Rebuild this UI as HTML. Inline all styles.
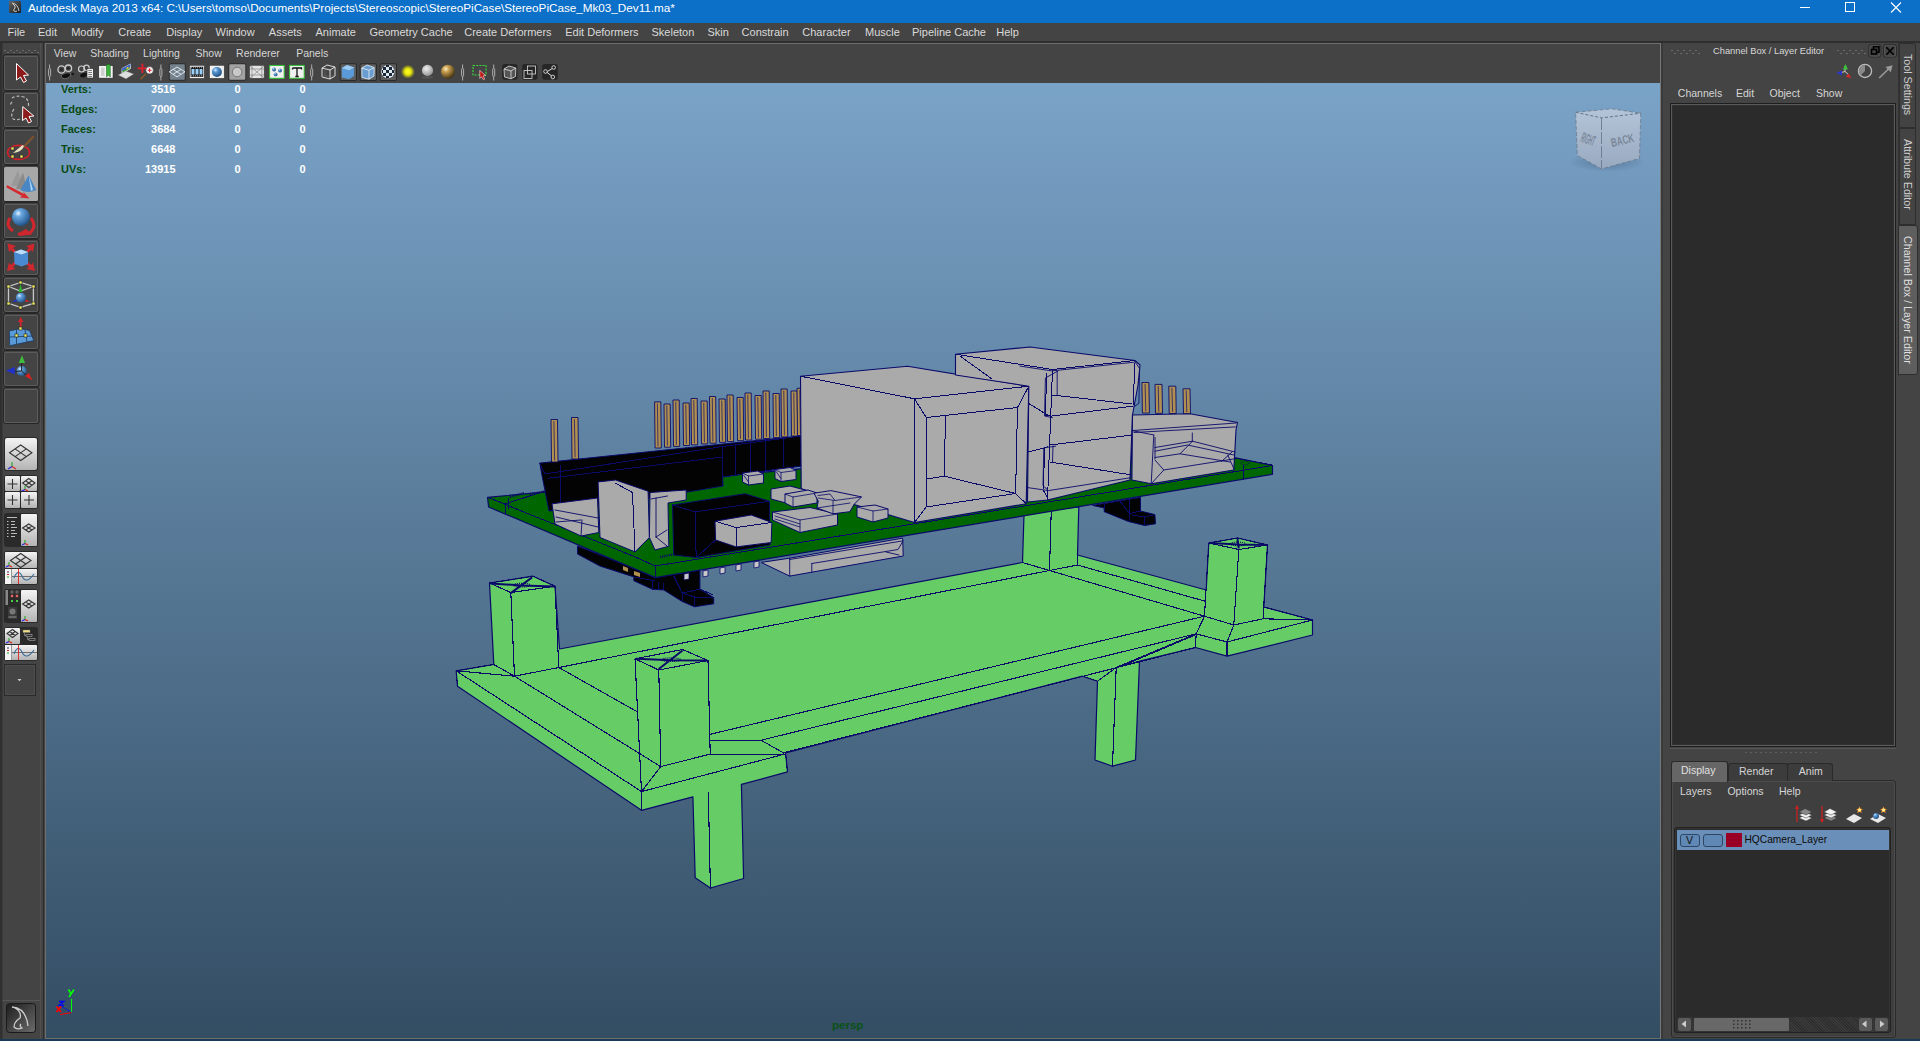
<!DOCTYPE html>
<html><head><meta charset="utf-8">
<style>
*{box-sizing:border-box;margin:0;padding:0}
html,body{width:1920px;height:1041px;overflow:hidden;background:#444444;font-family:"Liberation Sans",sans-serif;position:relative}
.a{position:absolute}
.t{position:absolute;white-space:pre;line-height:1;color:#d8d8d8}
#title{left:0;top:0;width:1920px;height:23px;background:#0c6fc8}
.mb .t{font-size:11px;top:27px;color:#dadada}
.pm .t{font-size:10.5px;top:48px;color:#d6d6d6}
.st .t{font-size:11px;font-weight:bold}.st .g{color:#0a4a12}.st .w{color:#fff}
.rm .t{font-size:10.5px;top:88px;color:#d6d6d6}.lt .t{font-size:10.5px;color:#d6d6d6}.vt{font-size:10.7px;color:#cfcfcf;transform-origin:0 0;transform:rotate(90deg) translateY(-10.5px);}
.tb{position:absolute;width:31px;height:33px;border:1px solid #2c2c2c;border-radius:3px;background:#464646;box-shadow:inset 0 0 0 1px #5a5a5a}
</style></head><body>
<!-- title bar -->
<div id="title">
  <div class="a" style="left:9px;top:1px;width:12px;height:12px;background:linear-gradient(135deg,#666,#1a1a1a);border-radius:1px"></div><svg class="a" style="left:9px;top:1px" width="12" height="12"><path d="M3 2Q9 3 10 10M4 3Q7 5 6 7Q4 9 5 10Q7 11 8 10" fill="none" stroke="#ddd" stroke-width="0.9"/></svg>
  <div class="t" style="left:28px;top:2px;font-size:11.7px;color:#fff">Autodesk Maya 2013 x64: C:\Users\tomso\Documents\Projects\Stereoscopic\StereoPiCase\StereoPiCase_Mk03_Dev11.ma*</div>
  <div class="a" style="left:1800px;top:7px;width:10px;height:1px;background:#fff"></div>
  <div class="a" style="left:1845px;top:2px;width:10px;height:10px;border:1px solid #fff"></div>
  <svg class="a" style="left:1890px;top:2px" width="12" height="11"><path d="M1 0.5L11 10.5M11 0.5L1 10.5" stroke="#fff" stroke-width="1.1"/></svg>
</div>
<!-- menu bar -->
<div id="menubar" class="a" style="left:0;top:23px;width:1920px;height:18px;background:#444">
</div>
<div class="mb"><div class="t" style="left:7.5px">File</div><div class="t" style="left:38.0px">Edit</div><div class="t" style="left:71.2px">Modify</div><div class="t" style="left:118.2px">Create</div><div class="t" style="left:166.2px">Display</div><div class="t" style="left:215.5px">Window</div><div class="t" style="left:268.8px">Assets</div><div class="t" style="left:315.5px">Animate</div><div class="t" style="left:369.5px">Geometry Cache</div><div class="t" style="left:464.2px">Create Deformers</div><div class="t" style="left:565.2px">Edit Deformers</div><div class="t" style="left:651.5px">Skeleton</div><div class="t" style="left:707.5px">Skin</div><div class="t" style="left:741.6px">Constrain</div><div class="t" style="left:802.3px">Character</div><div class="t" style="left:865.0px">Muscle</div><div class="t" style="left:912.0px">Pipeline Cache</div><div class="t" style="left:996.2px">Help</div></div>
<div class="a" style="left:0;top:41px;width:1920px;height:2px;background:#2e2e2e"></div>

<!-- left toolbox -->
<svg class="a" style="left:0;top:43px" width="44" height="996" viewBox="0 43 44 996">
<defs>
<radialGradient id="gsph" cx="0.35" cy="0.3" r="0.75"><stop offset="0" stop-color="#e8f4ff"/><stop offset="0.25" stop-color="#6aa8e0"/><stop offset="1" stop-color="#1d4f86"/></radialGradient>
<linearGradient id="glay" x1="0" y1="0" x2="0" y2="1"><stop offset="0" stop-color="#f4f4f4"/><stop offset="1" stop-color="#b4b4b4"/></linearGradient>
</defs>
<rect x="0" y="43" width="44" height="996" fill="#444"/>
<rect x="0" y="43" width="2.5" height="996" fill="#303030"/>
<rect x="40" y="43" width="1" height="996" fill="#505050"/>
<rect x="43" y="43" width="2" height="996" fill="#2c2c2c"/>
<!-- grip -->
<g fill="#6a6a6a">
<path d="M4 50h2v1h-2zM10 50h2v1h-2zM16 50h2v1h-2zM22 50h2v1h-2zM28 50h2v1h-2zM34 50h2v1h-2zM7 52h2v1h-2zM13 52h2v1h-2zM19 52h2v1h-2zM25 52h2v1h-2zM31 52h2v1h-2zM37 52h2v1h-2z"/>
</g>
<!-- tool buttons -->
<g fill="#444" stroke="#262626" stroke-width="1">
<rect x="3.5" y="54.5" width="35.5" height="36" rx="2"/>
<rect x="3.5" y="91.5" width="35.5" height="36" rx="2"/>
<rect x="3.5" y="128.5" width="35.5" height="36" rx="2"/>
<rect x="3.5" y="165.5" width="35.5" height="36" rx="2"/>
<rect x="3.5" y="202.5" width="35.5" height="36" rx="2"/>
<rect x="3.5" y="239.5" width="35.5" height="36" rx="2"/>
<rect x="3.5" y="276.5" width="35.5" height="36" rx="2"/>
<rect x="3.5" y="313.5" width="35.5" height="36" rx="2"/>
<rect x="3.5" y="350.5" width="35.5" height="36" rx="2"/>
<rect x="3.5" y="387.5" width="35.5" height="36" rx="2"/>
</g>
<g fill="none" stroke="#5c5c5c" stroke-width="1">
<rect x="4.5" y="56.5" width="33" height="33" rx="1.5"/>
<rect x="4.5" y="93.5" width="33" height="33" rx="1.5"/>
<rect x="4.5" y="130.5" width="33" height="33" rx="1.5"/>
<rect x="4.5" y="204.5" width="33" height="33" rx="1.5"/>
<rect x="4.5" y="241.5" width="33" height="33" rx="1.5"/>
<rect x="4.5" y="278.5" width="33" height="33" rx="1.5"/>
<rect x="4.5" y="315.5" width="33" height="33" rx="1.5"/>
<rect x="4.5" y="352.5" width="33" height="33" rx="1.5"/>
<rect x="4.5" y="389.5" width="33" height="33" rx="1.5"/>
</g>
<rect x="4" y="167" width="34" height="34" rx="1.5" fill="#a8a8a8"/>
<!-- 1 select arrow -->
<path d="M16.5 63.5L28.5 75L23.5 75.5L26.5 81L23.5 82.5L20.5 77L16.5 80Z" fill="#8e1b1b" stroke="#fff" stroke-width="1" stroke-linejoin="round"/>
<!-- 2 lasso -->
<path d="M12 98Q16 95 24 97Q29 99 28.5 107M12 102Q9 105 12 106M14 109Q11 113 12 118Q15 121 20 119" fill="none" stroke="#bbb" stroke-width="1.2" stroke-dasharray="3 2"/>
<path d="M22.8 106.6L33.8 116L29 116.5L31.5 121.5L28.5 123L26 118L22.5 120.5Z" fill="#8e1b1b" stroke="#fff" stroke-width="1" stroke-linejoin="round"/>
<!-- 3 paint -->
<ellipse cx="18.6" cy="152.4" rx="11" ry="7" fill="none" stroke="#d0202a" stroke-width="1.6"/>
<path d="M33 137L24 146.5" stroke="#7a5230" stroke-width="2.5" stroke-linecap="round"/>
<path d="M24 146Q22 152 13 153Q19 148 22.5 145Z" fill="#e8e0c0"/>
<g fill="#f4f060" stroke="#222" stroke-width="0.6"><rect x="11" y="147" width="3" height="3"/><rect x="11" y="155" width="3" height="3"/><rect x="20" y="155" width="3" height="3"/></g>
<!-- 4 move cones -->
<path d="M18 170L11 186L22 186Z" fill="#999"/><path d="M23 172.5L16 189L27 189Z" fill="#8a8a8a"/>
<path d="M28.7 175.3L20.3 190Q28 194 36.3 190Z" fill="#4a86c4"/><path d="M28.7 175.3L31 191L33 190Z" fill="#a8d6f8"/>
<path d="M7 185L24 194L23 191.5L29.5 198.5L19.5 197.5L22 196L6.5 187.5Z" fill="#d42a30"/>
<!-- 5 rotate -->
<path d="M10 218Q5 226 13 231M31 218Q37 226 31 232Q26 235 18 234" fill="none" stroke="#d0262e" stroke-width="3"/>
<path d="M17 234L26 229L32 235Z" fill="#d0262e"/>
<circle cx="20.9" cy="216.9" r="9" fill="url(#gsph)"/>
<!-- 6 scale -->
<g fill="#d0262e"><path d="M7.5 243.5L16 246L13 248L17 252L15 254L11 250L9 252Z"/><path d="M34.5 243.5L26 246L29 248L25 252L27 254L31 250L33 252Z"/><path d="M7 271L9 262.5L11 265L15 261L17 263L13 267L15.5 269Z"/><path d="M35 271L33 262.5L31 265L27 261L25 263L29 267L26.5 269Z"/></g>
<path d="M14 252L21 249.5L28 252L28 264L21.5 266.5L14.5 264Z" fill="#4a8ad0"/><path d="M14 252L21 249.5L28 252L21.5 254.5Z" fill="#bcdcf8"/>
<!-- 7 manip -->
<path d="M20.5 282.5L8.5 286.5L8.5 303.4L20.5 307.4L33.4 303.4L33.4 286.5Z M8.5 286.5L20.5 291 33.4 286.5" fill="none" stroke="#c8c8c8" stroke-width="1.3"/>
<circle cx="20.9" cy="297.7" r="5" fill="url(#gsph)"/>
<path d="M20.5 284L18.5 292L22.5 292Z" fill="#2db52d"/><path d="M12 302L16 299.5L17 301.5Z" fill="#2030e0"/><path d="M30 302L26 299.5L25 301.5Z" fill="#e02020"/>
<g fill="#f4f060" stroke="#222" stroke-width="0.6"><rect x="19" y="281" width="3" height="3"/><rect x="7" y="285" width="3" height="3"/><rect x="32" y="285" width="3" height="3"/><rect x="7" y="302" width="3" height="3"/><rect x="32" y="302" width="3" height="3"/><rect x="19" y="306" width="3" height="3"/></g>
<!-- 8 soft -->
<path d="M9.3 331L20.5 328.5L29.6 330.5L33.8 340.6L9.7 345.7Z" fill="#5b9ad8" stroke="#1c3a5c" stroke-width="0.8"/>
<path d="M9.5 337L33 336M16.5 330L16.5 344M25 330L27 342" stroke="#1c3a5c" stroke-width="0.8"/>
<path d="M20.7 317L18 322L19.8 322L19.8 327L21.6 327L21.6 322L23.4 322Z" fill="#d0262e"/>
<g fill="#f4f060" stroke="#222" stroke-width="0.6"><rect x="19" y="327" width="3" height="3"/><rect x="15" y="334" width="3" height="3"/><rect x="24" y="334" width="3" height="3"/></g>
<!-- 9 axis -->
<circle cx="21.6" cy="371" r="5" fill="url(#gsph)"/>
<path d="M21.6 371V362M21.6 371L14.5 371.5M21.6 371L27 376" stroke="#222" stroke-width="1"/>
<path d="M22 355.2L18.8 363L25 363Z" fill="#3cbf3c"/><path d="M5.9 370.5L14.8 367L14.8 374.5Z" fill="#2030c8"/><path d="M32.5 380.5L25 376L29 373Z" fill="#d82020"/>
<!-- layout buttons -->
<g fill="#2a2a2a"><rect x="4" y="437" width="34" height="34" rx="3"/><rect x="4" y="475" width="34" height="34" rx="3"/><rect x="4" y="513" width="34" height="34" rx="3"/><rect x="4" y="551" width="34" height="34" rx="3"/><rect x="4" y="589" width="34" height="34" rx="3"/><rect x="4" y="627" width="34" height="34" rx="3"/></g>
<g fill="url(#glay)">
<rect x="5" y="438" width="32" height="32" rx="2"/>
<rect x="5" y="476" width="15" height="15" rx="1"/><rect x="21" y="476" width="16" height="15" rx="1"/><rect x="5" y="492" width="15" height="16" rx="1"/><rect x="21" y="492" width="16" height="16" rx="1"/>
<rect x="21" y="514" width="16" height="32" rx="1"/>
<rect x="5" y="552" width="32" height="16" rx="1"/><rect x="5" y="569" width="32" height="15" rx="1"/>
<rect x="21" y="590" width="16" height="32" rx="1"/>
<rect x="5" y="628" width="15" height="16" rx="1"/><rect x="5" y="645" width="32" height="15" rx="1"/>
</g>
<rect x="5" y="569" width="6" height="15" fill="#f4f4f4"/><rect x="5" y="645" width="6" height="15" fill="#f4f4f4"/>
<rect x="11" y="569" width="1" height="15" fill="#999"/><rect x="11" y="645" width="1" height="15" fill="#999"/>
<path d="M12 576.5H37M12 652.5H37" stroke="#555" stroke-width="0.8"/>
<g fill="none" stroke="#333" stroke-width="1.1">
<path d="M20.7 445L31.9 452.7L20.7 460.5L9.5 452.7Z M15.1 448.9L26.3 456.6M26.3 448.9L15.1 456.6"/>
<path d="M12.5 479V489M7.5 484H17.5M12.5 495V505M7.5 500H17.5M29 495V505M24 500H34"/>
<path d="M28.8 478.5L35 483L28.8 487.5L22.6 483Z M25.7 480.7L31.9 485.3M31.9 480.7L25.7 485.3"/>
<path d="M28.8 524L35 528L28.8 532L22.6 528Z M25.7 526L31.9 530M31.9 526L25.7 530"/>
<path d="M20.7 553.5L31 560.5L20.7 567.5L10.4 560.5Z M15.5 557L25.9 564M25.9 557L15.5 564"/>
<path d="M28.8 600L35 604L28.8 608L22.6 604Z M25.7 602L31.9 606M31.9 602L25.7 606"/>
<path d="M12.5 629.5L18 633.5L12.5 637.5L7 633.5Z M9.7 631.5L15.2 635.5M15.2 631.5L9.7 635.5"/>
</g>
<path d="M14 578Q18 568 22 576Q26 585 34 574" fill="none" stroke="#3c6c98" stroke-width="1.1"/><path d="M18.5 569V584" stroke="#e02020" stroke-width="0.9"/>
<path d="M14 654Q18 644 22 652Q26 661 34 650" fill="none" stroke="#3c6c98" stroke-width="1.1"/><path d="M18.5 645V660" stroke="#e02020" stroke-width="0.9"/>
<g stroke-width="1"><path d="M7 572H9" stroke="#336"/><path d="M7 574.5H9" stroke="#d22"/><path d="M7 577H9" stroke="#2a2"/><path d="M7 648H9" stroke="#336"/><path d="M7 650.5H9" stroke="#d22"/><path d="M7 653H9" stroke="#2a2"/></g>
<g stroke="#ccc" stroke-width="0.9"><path d="M7 517.5H17M7 521.5H8.5M11 521.5H15M7 524.5H8.5M11 524.5H15M7 527.5H8.5M11 527.5H17M7 530.5H8.5M11 530.5H15M7 533.5H8.5M11 533.5H17M7 536.5H8.5M11 536.5H15"/></g>
<rect x="5.5" y="590" width="2.5" height="15" fill="#888"/>
<g fill="none" stroke="#888" stroke-width="0.7"><rect x="11" y="591" width="2" height="2"/><rect x="16" y="591" width="2" height="2"/></g>
<g fill="#e88" stroke="#c44" stroke-width="0.5"><rect x="11" y="595" width="2" height="2"/><rect x="16" y="595" width="2" height="2"/></g>
<g fill="#4c4"><rect x="11" y="600" width="2" height="2"/><rect x="16" y="600" width="2" height="2"/></g>
<rect x="8" y="607" width="9" height="12" fill="#3a3a3a"/><circle cx="12.5" cy="611.5" r="3" fill="#777"/><path d="M8.5 617H16.5" stroke="#aaa" stroke-width="0.8"/>
<rect x="23" y="630" width="7" height="2.5" fill="#eedd88" stroke="#776" stroke-width="0.4"/><g fill="none" stroke="#999" stroke-width="0.7"><rect x="26" y="634.5" width="6" height="2"/><rect x="29" y="638.5" width="6" height="2"/><path d="M24.5 632.5V635.5H26M27.5 636.5V639.5H29"/></g>
<g stroke-width="1.1"><path d="M12 466.5V462" stroke="#2a2"/><path d="M12 466.5L8 469" stroke="#22d"/><path d="M12 466.5L16 469" stroke="#d22"/>
<path d="M25 489.5V486" stroke="#2a2"/><path d="M25 489.5L22 491" stroke="#22d"/><path d="M25 489.5L28 491" stroke="#d22"/>
<path d="M25 543.5V540" stroke="#2a2"/><path d="M25 543.5L22 545" stroke="#22d"/><path d="M25 543.5L28 545" stroke="#d22"/>
<path d="M9 565.5V562" stroke="#2a2"/><path d="M9 565.5L6 567" stroke="#22d"/><path d="M9 565.5L12 567" stroke="#d22"/>
<path d="M25 619.5V616" stroke="#2a2"/><path d="M25 619.5L22 621" stroke="#22d"/><path d="M25 619.5L28 621" stroke="#d22"/>
<path d="M9 641.5V638" stroke="#2a2"/><path d="M9 641.5L6 643" stroke="#22d"/><path d="M9 641.5L12 643" stroke="#d22"/></g>
<rect x="4.5" y="664.5" width="31" height="31" fill="#444" stroke="#2a2a2a"/>
<rect x="5.5" y="665.5" width="29" height="29" fill="none" stroke="#4e4e4e"/>
<path d="M17.5 679h4l-2 2.2z" fill="#ccc"/>
<!-- inner frame -->
<rect x="2.5" y="1000" width="38" height="1" fill="#555"/>
<!-- maya logo -->
<rect x="6.5" y="1003.5" width="29" height="29" rx="3" fill="#2a2a2a" stroke="#1a1a1a"/>
<rect x="7" y="1004" width="28" height="28" rx="3" fill="url(#glogo)"/>
<defs><linearGradient id="glogo" x1="0" y1="0" x2="1" y2="1"><stop offset="0" stop-color="#1e1e1e"/><stop offset="1" stop-color="#6a6a6a"/></linearGradient></defs>
<path d="M12 1007Q26 1008 28 1026M15 1008Q22 1012 20 1018Q14 1022 14 1027Q17 1030 22 1028Q19 1026 21 1024" fill="none" stroke="#ccc" stroke-width="1.3"/>
</svg>


<!-- viewport panel -->
<div id="vpanel" class="a" style="left:45px;top:43px;width:1617px;height:996px;background:#444;border:1px solid #6e6e6e;border-right-color:#6e6e6e"></div>
<div class="pm"><div class="t" style="left:53.8px">View</div><div class="t" style="left:90.3px">Shading</div><div class="t" style="left:143.1px">Lighting</div><div class="t" style="left:195.5px">Show</div><div class="t" style="left:236.1px">Renderer</div><div class="t" style="left:296.2px">Panels</div></div>
<svg class="a" style="left:46px;top:60px" width="540" height="23" viewBox="46 60 540 23">
<defs>
<radialGradient id="gs2" cx="0.35" cy="0.3" r="0.75"><stop offset="0" stop-color="#d8ecff"/><stop offset="0.3" stop-color="#5a98d4"/><stop offset="1" stop-color="#1d4a7c"/></radialGradient>
<radialGradient id="gyel" cx="0.5" cy="0.5" r="0.5"><stop offset="0" stop-color="#ffff20"/><stop offset="0.45" stop-color="#e8e810"/><stop offset="1" stop-color="#e0e000" stop-opacity="0"/></radialGradient>
<radialGradient id="ggray" cx="0.4" cy="0.35" r="0.7"><stop offset="0" stop-color="#f0f0f0"/><stop offset="1" stop-color="#909090"/></radialGradient>
<radialGradient id="ggold" cx="0.35" cy="0.3" r="0.75"><stop offset="0" stop-color="#fff0c0"/><stop offset="0.3" stop-color="#c8a050"/><stop offset="1" stop-color="#3c2c10"/></radialGradient>
</defs>
<g fill="none" stroke="#bbb" stroke-width="0.9">
<path d="M49.6 64.5V68.5M49.6 76.5V80.5M160.9 64.5V68.5M160.9 76.5V80.5M311.7 64.5V68.5M311.7 76.5V80.5M462.6 64.5V68.5M462.6 76.5V80.5M493.7 64.5V68.5M493.7 76.5V80.5"/>
<rect x="48.6" y="68.5" width="2" height="8" rx="1"/><rect x="159.9" y="68.5" width="2" height="8" rx="1"/><rect x="310.7" y="68.5" width="2" height="8" rx="1"/><rect x="461.6" y="68.5" width="2" height="8" rx="1"/><rect x="492.7" y="68.5" width="2" height="8" rx="1"/>
</g>
<!-- cam1 -->
<g fill="none" stroke="#ccc" stroke-width="1.3"><circle cx="61.5" cy="69.5" r="3.6"/><circle cx="68.4" cy="68.2" r="3.2"/></g>
<g fill="#222"><circle cx="61.5" cy="69.5" r="1.3"/><circle cx="68.4" cy="68.2" r="1.2"/></g>
<path d="M61 76Q64 72 70 73Q72 76 67 78.5Q62 79.5 61 76Z" fill="#111" stroke="#999" stroke-width="0.6"/>
<path d="M70.5 74L73.5 72.5L74 75.5Z" fill="#111"/>
<!-- cam2 -->
<g fill="none" stroke="#ccc" stroke-width="1.2"><circle cx="81.5" cy="69" r="3"/><circle cx="86.5" cy="67.8" r="2.7"/></g>
<path d="M80 75Q83 72 87 73Q87 77 83 77.5Q80 77.5 80 75Z" fill="#111"/>
<rect x="87" y="68.5" width="6.3" height="9.5" fill="#f0f0f0" stroke="#222" stroke-width="0.6"/>
<path d="M88.3 70.5H92M88.3 72.5H92M88.3 74.5H92M88.3 76.5H92" stroke="#444" stroke-width="0.7"/>
<!-- book -->
<rect x="98.8" y="65.7" width="14.2" height="12.4" fill="#f2f2f2" stroke="#222" stroke-width="0.5"/>
<rect x="101" y="67.5" width="3.5" height="8.5" fill="#d0d0d0"/>
<path d="M106.5 64.5H110.3V77L108.4 75L106.5 77Z" fill="#3cb43c" stroke="#1a5a1a" stroke-width="0.5"/>
<!-- picture laptop -->
<path d="M117.8 75L126 79L134 74L126 71Z" fill="#e0e0e0" stroke="#555" stroke-width="0.5"/>
<path d="M122 73.5L130.5 68.5L130.5 64L122 68.5Z" fill="#48a040" stroke="#ddd" stroke-width="0.9"/>
<path d="M122 68.5L130.5 64V66.5L122 71Z" fill="#4060d0"/><circle cx="127.5" cy="68" r="1" fill="#e8d020"/>
<!-- move magnifier -->
<path d="M142.4 63.8V73M137.8 68.4H147" stroke="#e02030" stroke-width="1.6"/>
<path d="M142.4 63.5L141 65.5H143.8Z M142.4 73.3L141 71.3H143.8Z M137.5 68.4L139.5 67V69.8Z M147.3 68.4L145.3 67V69.8Z" fill="#e02030"/>
<circle cx="149.6" cy="70.3" r="3.8" fill="#f4f4f4" stroke="#333" stroke-width="0.6"/>
<path d="M149.6 68.3V72.3M147.6 70.3H151.6" stroke="#e02030" stroke-width="1.1"/>
<path d="M145.5 74.2L141 78.7" stroke="#8a5a2a" stroke-width="1.6" stroke-linecap="round"/>
<!-- selected wire grid -->
<rect x="168.8" y="63.3" width="17" height="17.5" rx="2" fill="#2c2c2c"/>
<rect x="169.8" y="64.3" width="15" height="15.5" rx="1" fill="#74828e"/>
<path d="M177 67L185 71.8L177 76.8L169.2 71.8Z M173.1 69.4L181 74.3M181 69.4L173.1 74.3" fill="none" stroke="#e8eef4" stroke-width="0.9"/>
<!-- film -->
<rect x="189.6" y="65.4" width="14.6" height="12.9" fill="#f0f0f0" stroke="#333" stroke-width="0.5"/>
<rect x="190.6" y="66.8" width="12.6" height="10" fill="#111"/>
<g fill="#9cd0f8"><rect x="191.5" y="69" width="3" height="5.5"/><rect x="195.5" y="69" width="3" height="5.5"/><rect x="199.5" y="69" width="3" height="5.5"/></g>
<g fill="#ddd"><rect x="191.2" y="67.3" width="0.9" height="0.9"/><rect x="193.2" y="67.3" width="0.9" height="0.9"/><rect x="195.2" y="67.3" width="0.9" height="0.9"/><rect x="197.2" y="67.3" width="0.9" height="0.9"/><rect x="199.2" y="67.3" width="0.9" height="0.9"/><rect x="201.2" y="67.3" width="0.9" height="0.9"/><rect x="191.2" y="75.3" width="0.9" height="0.9"/><rect x="193.2" y="75.3" width="0.9" height="0.9"/><rect x="195.2" y="75.3" width="0.9" height="0.9"/><rect x="197.2" y="75.3" width="0.9" height="0.9"/><rect x="199.2" y="75.3" width="0.9" height="0.9"/><rect x="201.2" y="75.3" width="0.9" height="0.9"/></g>
<!-- sphere -->
<rect x="209.6" y="65.4" width="14.6" height="12.9" fill="#f0f0f0" stroke="#333" stroke-width="0.5"/>
<circle cx="216.9" cy="72" r="5" fill="url(#gs2)"/>
<!-- selected circle -->
<rect x="228.3" y="63.3" width="18" height="17.5" rx="2" fill="#2c2c2c"/>
<rect x="229.3" y="64.3" width="16" height="15.5" rx="1" fill="#a2a2a2"/>
<circle cx="237.1" cy="72" r="4.8" fill="#c8c8c8" stroke="#666" stroke-width="0.8"/>
<!-- mesh -->
<rect x="249.6" y="65.4" width="14.6" height="12.9" fill="#e4e4e4" stroke="#333" stroke-width="0.5"/>
<path d="M250 66L264 78M264 66L250 78M252 66V78M261.8 66V78M250 69H264M250 75H264" stroke="#777" stroke-width="0.6"/>
<!-- dots -->
<rect x="269.6" y="65.4" width="14.6" height="12.9" fill="#f0f0f0" stroke="#2fc02f" stroke-width="1"/>
<g fill="url(#gs2)"><circle cx="274" cy="69.5" r="1.9"/><circle cx="280" cy="70.5" r="1.9"/><circle cx="275.6" cy="74.4" r="1.9"/></g>
<!-- T -->
<rect x="289.6" y="65.4" width="14.6" height="12.9" fill="#f0f0f0" stroke="#2fc02f" stroke-width="1"/>
<path d="M292.5 68H301.5V69.5M292.5 68V69.5M297 68V76.5M295.3 76.5H298.7" fill="none" stroke="#111" stroke-width="1.3"/>
<!-- wire cube -->
<path d="M322 68L327 65L335 67L335 76L330 79L322 77Z M322 68L330 70L335 67M330 70V79" fill="none" stroke="#eee" stroke-width="0.9"/>
<path d="M325 67L325 76L322 77M325 76L335 76" fill="none" stroke="#777" stroke-width="0.5"/>
<!-- selected blue cubes + checker -->
<g fill="#2a2a2a"><rect x="339.6" y="63.3" width="17.4" height="17.6" rx="2"/><rect x="359.6" y="63.3" width="17.4" height="17.6" rx="2"/><rect x="379.6" y="63.3" width="17.4" height="17.6" rx="2"/></g>
<g fill="#5c5c5c"><rect x="340.6" y="64.3" width="15.4" height="15.6" rx="1"/><rect x="360.6" y="64.3" width="15.4" height="15.6" rx="1"/><rect x="380.6" y="64.3" width="15.4" height="15.6" rx="1"/></g>
<path d="M341.8 68L347 65L354.2 67.5L354 76L349 79.2L342 77.5Z" fill="#5a9ad8"/>
<path d="M341.8 68L347 65L354.2 67.5L349 70.3Z" fill="#9ccaf0"/>
<path d="M361.8 68L367 65L374.2 67.5L374 76L369 79.2L362 77.5Z" fill="#6a9ed0" stroke="#e8f0f8" stroke-width="0.8"/>
<path d="M361.8 68L369 70.3L374.2 67.5M369 70.3V79" fill="none" stroke="#e8f0f8" stroke-width="0.8"/>
<circle cx="387.9" cy="71.7" r="6.6" fill="#e0e8f0"/>
<g fill="#1a2838"><path d="M383 67h3v3h-3zM389 67h3v3h-3zM386 70h3v3h-3zM392 70h2v3h-2zM383 73h3v3h-3zM389 73h3v3h-3zM386 76h3v2h-3zM382 70h1v3h-1zM386 65h3v2h-3z"/></g>
<!-- lights -->
<circle cx="407.9" cy="71.7" r="7" fill="url(#gyel)"/>
<ellipse cx="427.5" cy="77.3" rx="6" ry="1.3" fill="#555"/>
<circle cx="427.5" cy="70.4" r="5.6" fill="url(#ggray)"/>
<circle cx="447.9" cy="71.7" r="7" fill="url(#ggold)"/>
<!-- select box -->
<rect x="473" y="65.5" width="13" height="9.5" fill="none" stroke="#3ce03c" stroke-width="1.1" stroke-dasharray="2 1.2"/>
<path d="M479.7 70.3L485.5 75.5L483 76L484.8 79L483.3 79.8L481.5 76.8L479.8 78.5Z" fill="#c01818" stroke="#fff" stroke-width="0.5"/>
<!-- dark buttons -->
<g fill="#262626"><rect x="502.2" y="64" width="15.3" height="15.7" rx="2.5"/><rect x="522.2" y="64" width="15.3" height="15.7" rx="2.5"/><rect x="542.2" y="64" width="15.6" height="15.7" rx="2.5"/></g>
<path d="M504 69L509 66L515.8 68L515.5 76.5L511 78.8L504.5 77Z" fill="#555" stroke="#e0e0e0" stroke-width="0.8"/>
<path d="M504 69L511 71L515.8 68M511 71V78.6" fill="none" stroke="#e0e0e0" stroke-width="0.8"/>
<g fill="none" stroke="#ddd" stroke-width="0.8"><rect x="524" y="70.5" width="8" height="8"/><rect x="527.5" y="66" width="8" height="8"/></g>
<path d="M546.5 72L553 68M546.5 72L552.5 76.7" stroke="#ddd" stroke-width="1"/>
<g fill="#262626" stroke="#ddd" stroke-width="0.9"><circle cx="545.5" cy="71.5" r="1.8"/><circle cx="553.7" cy="67.5" r="1.8"/><circle cx="552.8" cy="77" r="1.8"/></g>
</svg>

<div id="viewport" class="a" style="left:46px;top:83px;width:1614px;height:955px;background:linear-gradient(#7aa3c8,#334d63)"></div>

<svg class="a" style="left:0;top:0" width="1920" height="1041" viewBox="0 0 1920 1041"><polygon points="456.2,670.8 493.8,664.5 489.5,583.0 533.0,576.2 555.0,586.2 559.5,649.0 1022.5,562.5 1024.0,514.0 1051.0,510.0 1078.8,507.0 1077.5,555.0 1206.2,590.0 1208.8,543.0 1237.5,538.0 1267.5,545.0 1263.8,607.0 1312.5,620.0 1312.5,635.0 1227.0,656.2 1195.5,647.5 1139.5,661.2 1135.5,760.0 1112.5,766.2 1095.0,760.0 1097.5,681.2 1082.5,676.2 785.6,753.0 787.5,771.9 741.4,784.4 743.6,878.5 710.4,888.0 695.2,877.8 692.9,796.8 641.5,810.3 457.5,686.2" fill="#66cc66" stroke="#0a0a6a" stroke-width="1.2" stroke-linejoin="round"/>
<path d="M489.5 583.0 L533.0 576.2 L555.0 586.2 L510.8 592.5 L489.5 583.0M510.8 592.5 L514.5 676.2M555.0 586.2 L558.8 667.5M456.2 670.8 L493.8 664.5M493.8 664.5 L514.5 676.2 L558.8 667.5M456.2 670.8 L514.5 676.2M456.2 670.8 L641.5 791.6M514.5 676.2 L660.7 766.6M558.8 667.5 L636.2 711.2M456.2 670.8 L457.5 686.2M641.5 791.6 L641.5 810.3M635.0 658.8 L682.5 649.5 L708.0 660.5 L658.8 670.0 L635.0 658.8M635.0 658.8 L641.5 791.6M658.8 670.0 L660.7 766.6M708.0 660.5 L710.2 754.1M660.7 766.6 L641.5 791.6M660.7 766.6 L710.2 754.1M709.7 740.2 L761.1 740.2 L783.7 753.1M710.2 754.1 L784.7 754.1M641.5 791.6 L784.7 754.1M785.6 754.1 L787.5 771.9M709.7 734.4 L1204.5 616.2M761.1 740.2 L1196.2 633.8M784.7 752.5 L1195.5 647.5M558.8 667.5 L1049.5 570.5M1022.5 562.5 L1049.5 570.5 L1077.5 565.0M1051.2 512.0 L1049.5 570.0M1077.5 553.0 L1077.5 565.0M1077.5 565.0 L1205.0 601.2M1049.5 570.5 L1204.5 616.2M1208.8 543.0 L1237.5 538.0 L1267.5 545.0 L1238.8 549.5 L1208.8 543.0M1238.8 549.5 L1233.8 625.0M1208.8 543.0 L1204.5 616.2M1204.5 616.2 L1233.8 625.0 L1263.0 618.8M1267.5 545.0 L1263.0 618.8M1263.8 607.0 L1312.5 620.0M1312.5 620.0 L1227.0 642.0M1227.0 642.0 L1227.0 656.2M1233.8 625.0 L1227.0 642.0M1204.5 616.2 L1196.2 633.8 L1195.5 647.5M1196.2 633.8 L1227.0 642.0M1263.0 618.8 L1312.5 620.0M1097.5 681.2 L1116.2 667.5 L1139.5 661.2M1116.2 667.5 L1112.5 766.2M1116.2 667.5 L1196.2 633.8M1122.0 666.0 L1196.2 634.5M1082.5 676.2 L1097.5 681.2M708.3 792.5 L710.4 888.0" fill="none" stroke="#0a0a6a" stroke-width="1.1" stroke-linejoin="round" stroke-linecap="round" shape-rendering="crispEdges"/>
<path d="M490.4 583.4L522.2 585.6L554 586.6M510.7 593.1L532.1 577.4" stroke="#0a0a6a" stroke-width="2" fill="none"/>
<ellipse cx="521.8" cy="585.1" rx="8.5" ry="1.8" fill="none" stroke="#0a0a6a" stroke-width="1.2" stroke-dasharray="1 1"/>
<path d="M636 658.75L671.5 660.225L707 660.5M658.75 669L682.5 650.5" stroke="#0a0a6a" stroke-width="2" fill="none"/>
<ellipse cx="671.1" cy="659.7" rx="9.5" ry="1.8" fill="none" stroke="#0a0a6a" stroke-width="1.2" stroke-dasharray="1 1"/>
<path d="M1209.75 543L1238.125 544.6L1266.5 545M1238.75 548.5L1237.5 539" stroke="#0a0a6a" stroke-width="2" fill="none"/>
<ellipse cx="1238.1" cy="543.9" rx="7.6" ry="1.8" fill="none" stroke="#0a0a6a" stroke-width="1.2" stroke-dasharray="1 1"/>
<polygon points="577.5,546.0 633.0,568.0 655.3,577.6 699.9,570.0 699.9,589.2 713.7,597.6 713.7,603.8 694.5,606.8 682.2,601.5 663.8,590.0 652.2,589.2 633.8,580.7 633.8,576.9 600.0,566.1 577.5,554.0" fill="#030303" stroke="#0a0a6a" stroke-width="1" stroke-linejoin="round"/>
<path d="M633.8 576.9 L655.0 581.0M652.2 580.0 L652.2 589.2M658.0 582.0 L658.0 590.0M663.8 583.0 L663.8 590.0M673.8 576.1 L682.2 593.0 L682.2 601.5M682.2 593.0 L699.9 589.2 L712.2 594.5M694.5 597.0 L694.5 606.8M682.2 593.0 L694.5 597.0 L713.7 597.6" fill="none" stroke="#0a0a6a" stroke-width="1" stroke-linejoin="round" stroke-linecap="round" shape-rendering="crispEdges"/>
<polygon points="684.0,574.0 689.0,573.0 689.0,579.0 684.0,580.0" fill="#c8c8c8" stroke="#0a0a6a" stroke-width="0.8" stroke-linejoin="round"/>
<polygon points="703.0,571.0 708.0,570.0 708.0,576.0 703.0,577.0" fill="#c8c8c8" stroke="#0a0a6a" stroke-width="0.8" stroke-linejoin="round"/>
<polygon points="720.0,568.0 725.0,567.0 725.0,573.0 720.0,574.0" fill="#c8c8c8" stroke="#0a0a6a" stroke-width="0.8" stroke-linejoin="round"/>
<polygon points="736.0,565.0 741.0,564.0 741.0,570.0 736.0,571.0" fill="#c8c8c8" stroke="#0a0a6a" stroke-width="0.8" stroke-linejoin="round"/>
<polygon points="754.0,562.0 759.0,561.0 759.0,567.0 754.0,568.0" fill="#c8c8c8" stroke="#0a0a6a" stroke-width="0.8" stroke-linejoin="round"/>
<polygon points="761.1,562.4 789.7,558.2 902.7,538.1 903.2,556.0 789.7,576.1" fill="#aaaaaa" stroke="#0a0a6a" stroke-width="1" stroke-linejoin="round"/>
<path d="M789.7 558.2 L789.7 576.1M811.8 563.5 L811.8 572.2M789.7 559.5 L902.0 541.0M811.8 563.5 L898.0 549.5 L903.0 541.0M886.0 552.0 L899.0 555.0" fill="none" stroke="#0a0a6a" stroke-width="0.9" stroke-linejoin="round" stroke-linecap="round" shape-rendering="crispEdges"/>
<polygon points="1092.7,505.4 1140.5,497.3 1140.5,511.1 1154.9,514.6 1155.5,523.8 1144.6,525.5 1128.4,521.5 1104.2,511.7 1104.2,508.0" fill="#030303" stroke="#0a0a6a" stroke-width="1" stroke-linejoin="round"/>
<path d="M1104.2 504.0 L1104.2 511.7M1120.0 501.0 L1129.5 513.5M1129.5 499.0 L1129.5 521.5M1129.5 513.5 L1140.5 511.1M1132.0 515.0 L1144.6 517.0 L1154.9 514.6M1144.6 517.0 L1144.6 525.5" fill="none" stroke="#0a0a6a" stroke-width="1" stroke-linejoin="round" stroke-linecap="round" shape-rendering="crispEdges"/>
<polygon points="623.0,566.0 628.0,568.0 628.0,572.0 623.0,570.0" fill="#b09050"/>
<polygon points="634.0,571.0 640.0,573.0 640.0,577.0 634.0,575.0" fill="#b09050"/>
<polygon points="487.5,497.3 1140.0,438.0 1272.5,465.5 1272.5,474.2 655.3,577.6 488.6,507.0" fill="#006600" stroke="#0a0a6a" stroke-width="1.2" stroke-linejoin="round"/>
<path d="M487.5 497.3 L633.0 556.0M633.0 556.0 L655.3 566.0M655.3 566.0 L1272.5 465.5M655.3 566.0 L655.3 577.6M1235.0 458.0 L1272.0 465.0M508.0 498.0 L508.0 509.0M600.0 538.0 L605.0 532.0 L640.0 535.0" fill="none" stroke="#0a0a6a" stroke-width="1" stroke-linejoin="round" stroke-linecap="round" shape-rendering="crispEdges"/>
<path d="M510 497L524 493M530 494L545 491.5M660 557L690 551" stroke="#0a0a6a" stroke-width="2.2" stroke-dasharray="1.2 1"/>
<path d="M487.5 497.3 L505.0 504.0 L506.0 514.0M505.0 504.0 L545.0 491.0" fill="none" stroke="#0a0a6a" stroke-width="1" stroke-linejoin="round" stroke-linecap="round" shape-rendering="crispEdges"/>
<polygon points="539.8,463.1 801.0,435.9 801.0,466.1 722.6,477.0 723.0,486.0 640.0,500.0 549.0,511.0 541.8,474.4" fill="#030303" stroke="#0a0a6a" stroke-width="1" stroke-linejoin="round"/>
<path d="M539.8 463.1 L545.0 474.0 L722.6 446.5 L801.0 436.0M548.9 478.2 L722.6 457.0M560.0 465.0 L560.0 511.0M722.6 446.5 L722.6 486.0M735.0 444.0 L735.0 475.0M750.0 442.0 L750.0 472.0M765.0 440.0 L765.0 470.0M783.0 437.0 L783.0 467.0M722.6 477.0 L801.0 466.0" fill="none" stroke="#0a0a6a" stroke-width="1" stroke-linejoin="round" stroke-linecap="round" shape-rendering="crispEdges"/>
<polygon points="551.0,419.5 557.5,419.5 558.0,462.0 551.5,462.0" fill="#b09050" stroke="#0a0a6a" stroke-width="0.9" stroke-linejoin="round"/>
<path d="M553.9 421.5 L554.6 460.0" fill="none" stroke="#0a0a6a" stroke-width="0.7" stroke-linejoin="round" stroke-linecap="round" shape-rendering="crispEdges"/>
<polygon points="571.5,417.5 578.0,417.5 578.5,459.0 572.0,459.0" fill="#b09050" stroke="#0a0a6a" stroke-width="0.9" stroke-linejoin="round"/>
<path d="M574.4 419.5 L575.1 457.0" fill="none" stroke="#0a0a6a" stroke-width="0.7" stroke-linejoin="round" stroke-linecap="round" shape-rendering="crispEdges"/>
<polygon points="654.6,401.9 660.8,401.9 661.3,448.0 655.1,448.0" fill="#b09050" stroke="#0a0a6a" stroke-width="0.9" stroke-linejoin="round"/>
<path d="M657.4 403.9 L658.0 446.0" fill="none" stroke="#0a0a6a" stroke-width="0.7" stroke-linejoin="round" stroke-linecap="round" shape-rendering="crispEdges"/>
<polygon points="664.0,404.0 670.2,404.0 670.7,447.2 664.5,447.2" fill="#b09050" stroke="#0a0a6a" stroke-width="0.9" stroke-linejoin="round"/>
<path d="M666.8 406.0 L667.4 445.2" fill="none" stroke="#0a0a6a" stroke-width="0.7" stroke-linejoin="round" stroke-linecap="round" shape-rendering="crispEdges"/>
<polygon points="673.0,400.0 679.2,400.0 679.7,446.4 673.5,446.4" fill="#b09050" stroke="#0a0a6a" stroke-width="0.9" stroke-linejoin="round"/>
<path d="M675.8 402.0 L676.4 444.4" fill="none" stroke="#0a0a6a" stroke-width="0.7" stroke-linejoin="round" stroke-linecap="round" shape-rendering="crispEdges"/>
<polygon points="683.0,403.0 689.2,403.0 689.7,445.5 683.5,445.5" fill="#b09050" stroke="#0a0a6a" stroke-width="0.9" stroke-linejoin="round"/>
<path d="M685.8 405.0 L686.4 443.5" fill="none" stroke="#0a0a6a" stroke-width="0.7" stroke-linejoin="round" stroke-linecap="round" shape-rendering="crispEdges"/>
<polygon points="691.0,398.5 697.2,398.5 697.7,444.8 691.5,444.8" fill="#b09050" stroke="#0a0a6a" stroke-width="0.9" stroke-linejoin="round"/>
<path d="M693.8 400.5 L694.4 442.8" fill="none" stroke="#0a0a6a" stroke-width="0.7" stroke-linejoin="round" stroke-linecap="round" shape-rendering="crispEdges"/>
<polygon points="701.0,401.0 707.2,401.0 707.7,443.9 701.5,443.9" fill="#b09050" stroke="#0a0a6a" stroke-width="0.9" stroke-linejoin="round"/>
<path d="M703.8 403.0 L704.4 441.9" fill="none" stroke="#0a0a6a" stroke-width="0.7" stroke-linejoin="round" stroke-linecap="round" shape-rendering="crispEdges"/>
<polygon points="709.5,396.5 715.7,396.5 716.2,443.2 710.0,443.2" fill="#b09050" stroke="#0a0a6a" stroke-width="0.9" stroke-linejoin="round"/>
<path d="M712.3 398.5 L712.9 441.2" fill="none" stroke="#0a0a6a" stroke-width="0.7" stroke-linejoin="round" stroke-linecap="round" shape-rendering="crispEdges"/>
<polygon points="719.0,399.0 725.2,399.0 725.7,442.3 719.5,442.3" fill="#b09050" stroke="#0a0a6a" stroke-width="0.9" stroke-linejoin="round"/>
<path d="M721.8 401.0 L722.4 440.3" fill="none" stroke="#0a0a6a" stroke-width="0.7" stroke-linejoin="round" stroke-linecap="round" shape-rendering="crispEdges"/>
<polygon points="727.0,395.0 733.2,395.0 733.7,441.6 727.5,441.6" fill="#b09050" stroke="#0a0a6a" stroke-width="0.9" stroke-linejoin="round"/>
<path d="M729.8 397.0 L730.4 439.6" fill="none" stroke="#0a0a6a" stroke-width="0.7" stroke-linejoin="round" stroke-linecap="round" shape-rendering="crispEdges"/>
<polygon points="737.0,397.5 743.2,397.5 743.7,440.7 737.5,440.7" fill="#b09050" stroke="#0a0a6a" stroke-width="0.9" stroke-linejoin="round"/>
<path d="M739.8 399.5 L740.4 438.7" fill="none" stroke="#0a0a6a" stroke-width="0.7" stroke-linejoin="round" stroke-linecap="round" shape-rendering="crispEdges"/>
<polygon points="745.0,393.0 751.2,393.0 751.7,440.0 745.5,440.0" fill="#b09050" stroke="#0a0a6a" stroke-width="0.9" stroke-linejoin="round"/>
<path d="M747.8 395.0 L748.4 438.0" fill="none" stroke="#0a0a6a" stroke-width="0.7" stroke-linejoin="round" stroke-linecap="round" shape-rendering="crispEdges"/>
<polygon points="755.0,395.5 761.2,395.5 761.7,439.2 755.5,439.2" fill="#b09050" stroke="#0a0a6a" stroke-width="0.9" stroke-linejoin="round"/>
<path d="M757.8 397.5 L758.4 437.2" fill="none" stroke="#0a0a6a" stroke-width="0.7" stroke-linejoin="round" stroke-linecap="round" shape-rendering="crispEdges"/>
<polygon points="763.0,391.0 769.2,391.0 769.7,438.5 763.5,438.5" fill="#b09050" stroke="#0a0a6a" stroke-width="0.9" stroke-linejoin="round"/>
<path d="M765.8 393.0 L766.4 436.5" fill="none" stroke="#0a0a6a" stroke-width="0.7" stroke-linejoin="round" stroke-linecap="round" shape-rendering="crispEdges"/>
<polygon points="773.0,393.5 779.2,393.5 779.7,437.6 773.5,437.6" fill="#b09050" stroke="#0a0a6a" stroke-width="0.9" stroke-linejoin="round"/>
<path d="M775.8 395.5 L776.4 435.6" fill="none" stroke="#0a0a6a" stroke-width="0.7" stroke-linejoin="round" stroke-linecap="round" shape-rendering="crispEdges"/>
<polygon points="781.0,389.0 787.2,389.0 787.7,436.9 781.5,436.9" fill="#b09050" stroke="#0a0a6a" stroke-width="0.9" stroke-linejoin="round"/>
<path d="M783.8 391.0 L784.4 434.9" fill="none" stroke="#0a0a6a" stroke-width="0.7" stroke-linejoin="round" stroke-linecap="round" shape-rendering="crispEdges"/>
<polygon points="791.0,391.0 797.2,391.0 797.7,436.0 791.5,436.0" fill="#b09050" stroke="#0a0a6a" stroke-width="0.9" stroke-linejoin="round"/>
<path d="M793.8 393.0 L794.4 434.0" fill="none" stroke="#0a0a6a" stroke-width="0.7" stroke-linejoin="round" stroke-linecap="round" shape-rendering="crispEdges"/>
<polygon points="797.0,388.3 803.2,388.3 803.7,435.5 797.5,435.5" fill="#b09050" stroke="#0a0a6a" stroke-width="0.9" stroke-linejoin="round"/>
<path d="M799.8 390.3 L800.4 433.5" fill="none" stroke="#0a0a6a" stroke-width="0.7" stroke-linejoin="round" stroke-linecap="round" shape-rendering="crispEdges"/>
<polygon points="1141.9,382.5 1148.9,382.5 1149.4,413.0 1142.4,413.0" fill="#b09050" stroke="#0a0a6a" stroke-width="0.9" stroke-linejoin="round"/>
<path d="M1145.1 384.5 L1145.8 411.0" fill="none" stroke="#0a0a6a" stroke-width="0.7" stroke-linejoin="round" stroke-linecap="round" shape-rendering="crispEdges"/>
<polygon points="1155.0,384.4 1162.0,384.4 1162.5,413.3 1155.5,413.3" fill="#b09050" stroke="#0a0a6a" stroke-width="0.9" stroke-linejoin="round"/>
<path d="M1158.2 386.4 L1158.8 411.3" fill="none" stroke="#0a0a6a" stroke-width="0.7" stroke-linejoin="round" stroke-linecap="round" shape-rendering="crispEdges"/>
<polygon points="1168.8,386.2 1175.8,386.2 1176.2,413.5 1169.2,413.5" fill="#b09050" stroke="#0a0a6a" stroke-width="0.9" stroke-linejoin="round"/>
<path d="M1171.9 388.2 L1172.6 411.5" fill="none" stroke="#0a0a6a" stroke-width="0.7" stroke-linejoin="round" stroke-linecap="round" shape-rendering="crispEdges"/>
<polygon points="1183.0,388.8 1190.0,388.8 1190.5,413.8 1183.5,413.8" fill="#b09050" stroke="#0a0a6a" stroke-width="0.9" stroke-linejoin="round"/>
<path d="M1186.2 390.8 L1186.8 411.8" fill="none" stroke="#0a0a6a" stroke-width="0.7" stroke-linejoin="round" stroke-linecap="round" shape-rendering="crispEdges"/>
<polygon points="800.5,376.2 907.5,366.2 1028.8,386.2 1026.2,503.8 914.5,522.5 801.2,488.8" fill="#aaaaaa" stroke="#0a0a6a" stroke-width="1.1" stroke-linejoin="round"/>
<path d="M800.5 376.2 L914.5 398.8 L1028.8 386.2M914.5 398.8 L914.5 522.5M914.5 398.8 L926.2 417.5 L1017.5 407.5 L1028.8 386.2M926.2 417.5 L926.2 507.0M1017.5 407.5 L1015.6 493.5M914.5 522.5 L926.2 507.0 L1015.6 493.5 L1026.2 503.8M945.4 416.5 L944.4 476.2M926.2 479.0 L944.4 476.2 L1015.6 493.5" fill="none" stroke="#0a0a6a" stroke-width="1" stroke-linejoin="round" stroke-linecap="round" shape-rendering="crispEdges"/>
<polygon points="955.5,354.2 1030.0,347.0 1135.0,360.5 1140.0,365.0 1138.0,385.0 1132.5,415.0 1130.0,480.0 1047.5,500.0 1027.5,502.0 1028.8,386.2 955.5,375.0" fill="#aaaaaa" stroke="#0a0a6a" stroke-width="1.1" stroke-linejoin="round"/>
<path d="M955.5 354.2 L1052.5 369.5 L1135.0 360.5M1052.5 369.5 L1047.5 500.0M955.5 354.2 L955.5 375.0M960.0 356.0 L992.0 379.0M1028.0 403.0 L1047.5 415.0M1028.0 452.0 L1047.5 447.0M1050.0 416.2 L1132.5 406.2M1050.0 445.0 L1132.5 435.0M1052.0 395.0 L1132.0 404.0M1050.0 462.0 L1132.0 475.0M1047.0 373.0 L1045.0 415.0 L1050.0 416.0M1045.0 447.0 L1043.0 490.0 L1048.0 498.0M1135.0 363.0 L1133.0 405.0M1133.0 435.0 L1130.0 477.0" fill="none" stroke="#0a0a6a" stroke-width="1" stroke-linejoin="round" stroke-linecap="round" shape-rendering="crispEdges"/>
<path d="M1020.0 366.1 L1051.7 370.9 L1134.1 362.2M1058.0 370.9 L1045.4 378.0 L1044.6 416.0 L1052.5 417.7M1057.2 371.0 L1057.2 394.7M1055.7 446.2 L1043.8 447.8 L1043.0 485.8 L1047.7 489.8M1053.0 446.0 L1052.5 462.0M1134.1 360.6 L1139.6 368.5 L1138.9 403.4 L1134.1 406.6M1130.9 435.1 L1137.3 435.9 L1136.5 471.5 L1129.4 477.9M1026.3 487.4 L1048.5 490.6 L1129.4 477.9" fill="none" stroke="#0a0a6a" stroke-width="0.9" stroke-linejoin="round" stroke-linecap="round" shape-rendering="crispEdges"/>
<polygon points="1132.5,415.0 1190.0,413.8 1237.5,422.5 1236.0,430.0 1233.8,470.0 1151.2,483.8 1131.9,480.0" fill="#aaaaaa" stroke="#0a0a6a" stroke-width="1.1" stroke-linejoin="round"/>
<path d="M1131.9 430.6 L1236.0 423.0M1134.0 432.5 L1235.4 426.9M1153.8 435.0 L1151.2 483.8M1131.9 430.6 L1153.8 435.0M1155.0 437.5 L1155.0 458.8M1192.3 433.0 L1192.3 441.5M1155.0 447.5 L1192.5 441.2 L1235.0 452.0M1155.0 451.2 L1187.5 445.0 L1234.0 455.0M1155.0 457.5 L1180.0 453.8 L1230.0 462.0M1180.0 453.8 L1192.5 441.2M1163.8 470.0 L1233.5 459.0M1155.0 460.0 L1163.8 470.0 L1151.2 483.8M1221.5 461.5 L1232.0 452.0M1227.7 455.0 L1234.0 469.0" fill="none" stroke="#0a0a6a" stroke-width="0.9" stroke-linejoin="round" stroke-linecap="round" shape-rendering="crispEdges"/>
<path d="M1243.0 465.0 L1243.0 480.0" fill="none" stroke="#0a0a6a" stroke-width="1" stroke-linejoin="round" stroke-linecap="round" shape-rendering="crispEdges"/>
<ellipse cx="1245" cy="463" rx="4" ry="2" fill="none" stroke="#0a0a6a" stroke-width="1" stroke-dasharray="1 1"/>
<polygon points="552.0,503.8 597.5,498.0 598.8,532.5 581.0,536.0 555.0,524.0" fill="#aaaaaa" stroke="#0a0a6a" stroke-width="1" stroke-linejoin="round"/>
<path d="M555.0 510.0 L598.0 518.0M556.0 517.0 L598.0 527.0M582.0 520.0 L581.0 536.0M556.0 522.0 L581.0 520.0" fill="none" stroke="#0a0a6a" stroke-width="0.9" stroke-linejoin="round" stroke-linecap="round" shape-rendering="crispEdges"/>
<polygon points="598.1,481.9 615.6,480.0 648.1,491.2 649.4,537.5 635.0,551.9 600.0,537.5" fill="#aaaaaa" stroke="#0a0a6a" stroke-width="1" stroke-linejoin="round"/>
<path d="M632.5 492.5 L635.0 551.9M649.0 538.0 L635.0 551.9M615.0 483.0 L632.5 492.5" fill="none" stroke="#0a0a6a" stroke-width="1" stroke-linejoin="round" stroke-linecap="round" shape-rendering="crispEdges"/>
<polygon points="650.0,492.5 686.2,490.0 686.2,500.0 668.0,503.0 668.8,546.2 655.0,550.0 649.4,537.5" fill="#aaaaaa" stroke="#0a0a6a" stroke-width="1" stroke-linejoin="round"/>
<path d="M651.0 499.0 L667.5 496.0M656.0 498.0 L656.0 537.0M656.0 537.0 L667.0 546.0M656.0 537.0 L667.0 530.0" fill="none" stroke="#0a0a6a" stroke-width="0.9" stroke-linejoin="round" stroke-linecap="round" shape-rendering="crispEdges"/>
<polygon points="672.5,505.0 745.0,493.8 769.4,501.2 770.0,545.0 696.2,557.5 673.8,555.0" fill="#030303" stroke="#0a0a6a" stroke-width="1" stroke-linejoin="round"/>
<path d="M672.5 505.0 L695.0 511.9 L769.4 501.2M695.0 511.9 L696.2 557.5M696.2 557.5 L720.0 536.0" fill="none" stroke="#0a0a6a" stroke-width="1" stroke-linejoin="round" stroke-linecap="round" shape-rendering="crispEdges"/>
<polygon points="715.0,521.2 751.2,515.0 771.9,522.5 771.2,542.5 736.2,546.9 715.6,540.0" fill="#aaaaaa" stroke="#0a0a6a" stroke-width="1" stroke-linejoin="round"/>
<path d="M715.0 521.2 L736.0 527.5 L771.9 522.5M736.0 527.5 L736.2 546.9" fill="none" stroke="#0a0a6a" stroke-width="1" stroke-linejoin="round" stroke-linecap="round" shape-rendering="crispEdges"/>
<polygon points="742.5,473.0 757.5,471.0 763.5,474.0 763.5,483.0 748.5,485.0 742.5,482.0" fill="#aaaaaa" stroke="#0a0a6a" stroke-width="1" stroke-linejoin="round"/>
<path d="M748.5 476.0 L748.5 485.0M742.5 473.0 L748.5 476.0 L763.5 474.0M743.5 475.0 L748.5 482.0" fill="none" stroke="#0a0a6a" stroke-width="0.8" stroke-linejoin="round" stroke-linecap="round" shape-rendering="crispEdges"/>
<polygon points="775.0,469.5 790.0,467.5 796.0,470.5 796.0,479.5 781.0,481.5 775.0,478.5" fill="#aaaaaa" stroke="#0a0a6a" stroke-width="1" stroke-linejoin="round"/>
<path d="M781.0 472.5 L781.0 481.5M775.0 469.5 L781.0 472.5 L796.0 470.5M776.0 471.5 L781.0 478.5" fill="none" stroke="#0a0a6a" stroke-width="0.8" stroke-linejoin="round" stroke-linecap="round" shape-rendering="crispEdges"/>
<polygon points="771.0,489.0 790.0,486.0 805.0,490.0 805.0,500.0 786.0,503.0 771.0,499.0" fill="#aaaaaa" stroke="#0a0a6a" stroke-width="1" stroke-linejoin="round"/>
<polygon points="785.0,494.0 808.0,490.0 817.0,493.0 817.0,503.0 793.0,507.0 785.0,503.0" fill="#aaaaaa" stroke="#0a0a6a" stroke-width="1" stroke-linejoin="round"/>
<path d="M785.0 494.0 L793.0 497.0 L817.0 493.0M793.0 497.0 L793.0 507.0" fill="none" stroke="#0a0a6a" stroke-width="0.8" stroke-linejoin="round" stroke-linecap="round" shape-rendering="crispEdges"/>
<polygon points="772.5,512.0 810.0,507.5 837.5,514.0 837.5,525.0 800.0,532.5 772.5,520.0" fill="#aaaaaa" stroke="#0a0a6a" stroke-width="1" stroke-linejoin="round"/>
<path d="M772.5 512.0 L800.0 520.0 L837.5 514.0M800.0 520.0 L800.0 532.5M775.0 516.0 L800.0 524.0M775.0 519.0 L800.0 527.0" fill="none" stroke="#0a0a6a" stroke-width="0.8" stroke-linejoin="round" stroke-linecap="round" shape-rendering="crispEdges"/>
<polygon points="814.0,493.2 830.9,490.6 861.5,496.9 854.1,504.3 849.9,511.7 833.0,513.8 817.0,508.0 818.2,501.1" fill="#aaaaaa" stroke="#0a0a6a" stroke-width="1" stroke-linejoin="round"/>
<path d="M818.2 498.0 L835.0 500.5 L861.0 497.0M833.0 501.0 L833.0 513.8M817.0 508.0 L850.0 503.0M835.0 500.5 L830.0 494.0 L818.0 495.5" fill="none" stroke="#0a0a6a" stroke-width="0.8" stroke-linejoin="round" stroke-linecap="round" shape-rendering="crispEdges"/>
<polygon points="857.0,507.0 875.0,505.0 888.0,509.0 888.0,518.0 873.0,522.0 857.0,517.0" fill="#aaaaaa" stroke="#0a0a6a" stroke-width="1" stroke-linejoin="round"/>
<path d="M857.0 507.0 L873.0 511.0 L888.0 509.0M873.0 511.0 L873.0 522.0" fill="none" stroke="#0a0a6a" stroke-width="0.8" stroke-linejoin="round" stroke-linecap="round" shape-rendering="crispEdges"/></svg>
<div class="st">
<div class="t g" style="left:61px;top:83.5px">Verts:</div><div class="t w" style="left:125.5px;top:83.5px;width:50px;text-align:right">3516</div><div class="t w" style="left:234.5px;top:83.5px">0</div><div class="t w" style="left:299.5px;top:83.5px">0</div>
<div class="t g" style="left:61px;top:103.5px">Edges:</div><div class="t w" style="left:125.5px;top:103.5px;width:50px;text-align:right">7000</div><div class="t w" style="left:234.5px;top:103.5px">0</div><div class="t w" style="left:299.5px;top:103.5px">0</div>
<div class="t g" style="left:61px;top:123.5px">Faces:</div><div class="t w" style="left:125.5px;top:123.5px;width:50px;text-align:right">3684</div><div class="t w" style="left:234.5px;top:123.5px">0</div><div class="t w" style="left:299.5px;top:123.5px">0</div>
<div class="t g" style="left:61px;top:143.5px">Tris:</div><div class="t w" style="left:125.5px;top:143.5px;width:50px;text-align:right">6648</div><div class="t w" style="left:234.5px;top:143.5px">0</div><div class="t w" style="left:299.5px;top:143.5px">0</div>
<div class="t g" style="left:61px;top:163.5px">UVs:</div><div class="t w" style="left:125.5px;top:163.5px;width:50px;text-align:right">13915</div><div class="t w" style="left:234.5px;top:163.5px">0</div><div class="t w" style="left:299.5px;top:163.5px">0</div>
</div>
<div class="t" style="left:832px;top:1019.5px;font-size:11.5px;font-weight:bold;color:#0a5216">persp</div>
<svg class="a" style="left:1560px;top:95px" width="100" height="90" viewBox="1560 95 100 90">
<defs><radialGradient id="gvcs" cx="0.5" cy="0.5" r="0.5"><stop offset="0" stop-color="#4a6a8c" stop-opacity="0.7"/><stop offset="1" stop-color="#4a6a8c" stop-opacity="0"/></radialGradient>
<linearGradient id="gvc" x1="0" y1="0" x2="0" y2="1"><stop offset="0" stop-color="#b4c4d8"/><stop offset="1" stop-color="#98aac0"/></linearGradient></defs>
<ellipse cx="1607" cy="162" rx="38" ry="10" fill="url(#gvcs)"/>
<path d="M1575.6 112.3L1611.9 108.8L1640.8 113.2L1639.5 158.5L1601.5 168.9L1577.3 155.5Z" fill="url(#gvc)"/>
<path d="M1575.6 112.3L1601.5 117.9L1640.8 113.2" fill="none" stroke="#5a6a7c" stroke-width="0.9" stroke-dasharray="3 2"/>
<path d="M1575.6 112.3L1611.9 108.8L1640.8 113.2M1640.8 113.2L1639.5 158.5L1601.5 168.9L1577.3 155.5L1575.6 112.3" fill="none" stroke="#6a7a8c" stroke-width="0.8" stroke-dasharray="4 2"/>
<path d="M1601.5 118V169" stroke="#6a7a8c" stroke-width="0.9" stroke-dasharray="12 2"/>
<text x="0" y="0" font-family="Liberation Sans" font-weight="bold" font-size="9" fill="#7a8899" transform="translate(1612,147) rotate(-13) scale(0.9,1.35)">BACK</text>
<text x="0" y="0" font-family="Liberation Sans" font-weight="bold" font-size="9" fill="#7a8899" transform="translate(1580,141.5) rotate(20) scale(0.5,1.6)">RIGHT</text>
</svg>
<svg class="a" style="left:50px;top:985px" width="30" height="35" viewBox="50 985 30 35">
<path d="M71.5 998.8V1012.7" stroke="#00ff00" stroke-width="1"/>
<path d="M71.5 1012.5L61.5 1006.5" stroke="#0000ff" stroke-width="1" stroke-dasharray="2 1"/>
<path d="M71.5 1012.6L60 1014.6" stroke="#ff0000" stroke-width="1"/>
<path d="M68.5 989.5L71 994M74 989.5L69 997" stroke="#00ff00" stroke-width="1.6" fill="none"/>
<path d="M59 1001.5H64L59 1005.3H64" stroke="#0000ff" stroke-width="1.3" fill="none"/>
<path d="M56.5 1006.5L61 1012M61 1006.5L56.5 1012" stroke="#ff0000" stroke-width="1.8" fill="none"/>
</svg>

<!-- right panel -->
<div id="rpanel" class="a" style="left:1662px;top:43px;width:258px;height:996px;background:#444"></div>
<div class="a" style="left:1660px;top:43px;width:1px;height:996px;background:#777"></div>
<div class="a" style="left:1661px;top:43px;width:2px;height:996px;background:#3a3a3a"></div>
<!-- grips -->
<svg class="a" style="left:1668px;top:48px" width="232" height="8">
<g fill="#6a6a6a"><path d="M3 2h2v1h-2zM9 2h2v1h-2zM15 2h2v1h-2zM21 2h2v1h-2zM27 2h2v1h-2zM6 5h2v1h-2zM12 5h2v1h-2zM18 5h2v1h-2zM24 5h2v1h-2zM30 5h2v1h-2z"/>
<path d="M169 2h2v1h-2zM175 2h2v1h-2zM181 2h2v1h-2zM187 2h2v1h-2zM193 2h2v1h-2zM172 5h2v1h-2zM178 5h2v1h-2zM184 5h2v1h-2zM190 5h2v1h-2zM196 5h2v1h-2z"/></g>
</svg>
<div class="t" style="left:1713px;top:46.5px;font-size:9.3px;color:#d8d8d8">Channel Box / Layer Editor</div>
<svg class="a" style="left:1830px;top:43px" width="70" height="40" viewBox="1830 43 70 40">
<rect x="1868.8" y="44.7" width="12" height="12.4" rx="2" fill="#444" stroke="#2a2a2a"/><rect x="1869.8" y="45.7" width="10" height="10.4" rx="1.5" fill="none" stroke="#5a5a5a" stroke-width="0.8"/>
<rect x="1883.5" y="44.7" width="13" height="12.4" rx="2" fill="#444" stroke="#2a2a2a"/><rect x="1884.5" y="45.7" width="11" height="10.4" rx="1.5" fill="none" stroke="#5a5a5a" stroke-width="0.8"/>
<g fill="none" stroke="#000" stroke-width="1.6"><rect x="1871.5" y="49.5" width="5" height="4.5"/><path d="M1873.5 49V46.8H1879V52.2H1876.8"/><path d="M1886.3 47.3L1893.7 54.7M1893.7 47.3L1886.3 54.7"/></g>
<path d="M1845 71.5V66M1845 71.5L1839.5 73M1845 71.5L1849 75" stroke="#ccc" stroke-width="1"/>
<path d="M1845.5 64L1842.8 69.5H1848Z" fill="#3cc03c"/><path d="M1836.3 73L1842 70.5V75.5Z" fill="#2838c8"/><path d="M1851.5 78L1846 77L1848.5 73.5Z" fill="#d82828"/>
<circle cx="1865" cy="70.9" r="6.6" fill="none" stroke="#bbb" stroke-width="1.3"/>
<path d="M1865 65V71L1860.8 75.2A6 6 0 0 1 1865 65Z" fill="#8a8a8a"/>
<path d="M1879.2 78L1891 66.5" stroke="#999" stroke-width="1.6"/><path d="M1892.6 65.2L1885.5 67L1890.8 72.3Z" fill="#999"/>
</svg>
<div class="rm">
<div class="t" style="left:1677.8px">Channels</div><div class="t" style="left:1736px">Edit</div><div class="t" style="left:1769.5px">Object</div><div class="t" style="left:1816px">Show</div>
</div>
<div class="a" style="left:1670px;top:103px;width:226px;height:644px;background:#2b2b2b;border:1px solid #1e1e1e;box-shadow:inset 0 0 0 1px #5a5a5a,inset 0 0 0 2px #303030"></div>
<!-- vertical tabs -->
<div class="a" style="left:1898px;top:43px;width:1px;height:333px;background:#333"></div>
<div class="a" style="left:1899px;top:43px;width:17px;height:85px;background:#434343;border:1px solid #2e2e2e;border-radius:0 3px 0 0"></div>
<div class="a" style="left:1899px;top:128px;width:17px;height:97px;background:#434343;border:1px solid #2e2e2e"></div>
<div class="a" style="left:1898px;top:225px;width:19.5px;height:150px;background:#5e5e5e;border:1px solid #2e2e2e;border-radius:0 3px 3px 0"></div>
<div class="t vt" style="left:1901.5px;top:53.5px;width:61px">Tool Settings</div>
<div class="t vt" style="left:1901.5px;top:139px;width:73px">Attribute Editor</div>
<div class="t vt" style="left:1901.5px;top:236px;width:128px;color:#e0e0e0">Channel Box / Layer Editor</div>
<div class="a" style="left:1670px;top:748px;width:226px;height:1px;background:#555"></div>
<!-- grip 2 -->
<svg class="a" style="left:1740px;top:750px" width="80" height="6"><g fill="#5e5e5e"><path d="M5 2h2v1h-2zM10 2h2v1h-2zM15 2h2v1h-2zM20 2h2v1h-2zM25 2h2v1h-2zM30 2h2v1h-2zM35 2h2v1h-2zM40 2h2v1h-2zM45 2h2v1h-2zM50 2h2v1h-2zM55 2h2v1h-2zM60 2h2v1h-2zM65 2h2v1h-2zM70 2h2v1h-2zM75 2h2v1h-2z"/></g></svg>
<!-- layer editor -->
<div class="a" style="left:1670.5px;top:779.5px;width:225px;height:258px;background:#3f3f3f;border:1px solid #2a2a2a;border-radius:3px;box-shadow:inset 0 0 0 1px #4c4c4c"></div>
<div class="a" style="left:1727.5px;top:763px;width:60px;height:18px;background:#3c3c3c;border:1px solid #2a2a2a;border-bottom:none;border-radius:3px 3px 0 0"></div>
<div class="a" style="left:1787px;top:763px;width:46px;height:18px;background:#3c3c3c;border:1px solid #2a2a2a;border-bottom:none;border-radius:3px 3px 0 0"></div>
<div class="a" style="left:1671px;top:760.5px;width:57px;height:21px;background:#666;border:1px solid #2a2a2a;border-bottom:none;border-radius:3px 3px 0 0"></div>
<div class="lt">
<div class="t" style="left:1681px;top:765px;color:#e0e0e0">Display</div><div class="t" style="left:1739px;top:766px">Render</div><div class="t" style="left:1798.8px;top:766px">Anim</div>
<div class="t" style="left:1680px;top:786px">Layers</div><div class="t" style="left:1727.4px;top:786px">Options</div><div class="t" style="left:1779px;top:786px">Help</div>
</div>
<svg class="a" style="left:1790px;top:800px" width="105" height="25" viewBox="1790 800 105 25">
<path d="M1797 822V806" stroke="#d02020" stroke-width="1.2"/><path d="M1797 805L1795 809H1799Z" fill="#d02020"/>
<g stroke="#333" stroke-width="0.5"><path d="M1799 818L1805 815L1812 818L1806 821Z" fill="#f0f0f0"/><path d="M1799 815L1805 812L1812 815L1806 818Z" fill="#f4f4f4"/><path d="M1799 812L1805 808.5L1812 812L1806 815Z" fill="#888"/></g>
<path d="M1822 806V822" stroke="#d02020" stroke-width="1.2"/><path d="M1822 823L1820 819H1824Z" fill="#d02020"/>
<g stroke="#333" stroke-width="0.5"><path d="M1824 818L1830 815L1837 818L1831 821Z" fill="#888"/><path d="M1824 815L1830 812L1837 815L1831 818Z" fill="#f0f0f0"/><path d="M1824 812L1830 808.5L1837 812L1831 815Z" fill="#f4f4f4"/></g>
<path d="M1846 819L1854 814L1862 818L1854 823Z" fill="#e8e8e8"/><path d="M1859.5 806.5l1 2.2 2.4 0.3-1.8 1.6 0.6 2.4-2.2-1.2-2.2 1.2 0.6-2.4-1.8-1.6 2.4-0.3z" fill="#ff9a20"/><circle cx="1859.5" cy="810" r="1.5" fill="#fff4a0"/>
<path d="M1870 819L1878 814L1886 818L1878 823Z" fill="#e8e8e8"/><path d="M1883.5 806.5l1 2.2 2.4 0.3-1.8 1.6 0.6 2.4-2.2-1.2-2.2 1.2 0.6-2.4-1.8-1.6 2.4-0.3z" fill="#ff9a20"/><circle cx="1883.5" cy="810" r="1.5" fill="#fff4a0"/>
<circle cx="1876" cy="816" r="3" fill="url(#gs2)"/>
</svg>
<div class="a" style="left:1674px;top:827px;width:217px;height:206px;background:#2b2b2b;border:1px solid #222;border-radius:3px;box-shadow:inset 0 0 0 1px #353535"></div>
<div class="a" style="left:1677px;top:830px;width:212px;height:20px;background:#6a8fb8"></div>
<div class="a" style="left:1680px;top:833.5px;width:20px;height:13px;background:#6088b4;border:1px solid #2e4666;border-radius:3px"></div>
<div class="a" style="left:1703px;top:833.5px;width:20px;height:13px;background:#6088b4;border:1px solid #2e4666;border-radius:3px"></div>
<div class="t" style="left:1686px;top:835px;font-size:10.5px;color:#111">V</div>
<div class="a" style="left:1726px;top:833px;width:16px;height:14px;background:#990025"></div>
<div class="t" style="left:1744.5px;top:835px;font-size:10.2px;color:#0a0a0a">HQCamera_Layer</div>
<!-- scrollbar -->
<div class="a" style="left:1677px;top:1016.5px;width:212px;height:15px;background:repeating-linear-gradient(45deg,#3a3a3a 0 1px,#2e2e2e 1px 2px);border-radius:3px"></div>
<div class="a" style="left:1677px;top:1016.5px;width:15px;height:15px;background:#5a5a5a;border:1px solid #333;border-radius:3px"></div>
<div class="a" style="left:1693px;top:1016.5px;width:97px;height:15px;background:#686868;border:1px solid #333;border-radius:2px"></div>
<div class="a" style="left:1858px;top:1016.5px;width:15px;height:15px;background:#5a5a5a;border:1px solid #333;border-radius:3px"></div>
<div class="a" style="left:1874px;top:1016.5px;width:15px;height:15px;background:#5a5a5a;border:1px solid #333;border-radius:3px"></div>
<svg class="a" style="left:1677px;top:1016px" width="212" height="16" viewBox="1677 1016 212 16">
<path d="M1681.5 1024L1686 1020.5V1027.5Z" fill="#ccc"/><path d="M1862 1024L1866.5 1020.5V1027.5Z" fill="#ccc"/><path d="M1884.5 1024L1880 1020.5V1027.5Z" fill="#ccc"/>
<g fill="#333"><path d="M1733 1020h1.5v1.5h-1.5zM1737 1020h1.5v1.5h-1.5zM1741 1020h1.5v1.5h-1.5zM1745 1020h1.5v1.5h-1.5zM1749 1020h1.5v1.5h-1.5zM1733 1023.5h1.5v1.5h-1.5zM1737 1023.5h1.5v1.5h-1.5zM1741 1023.5h1.5v1.5h-1.5zM1745 1023.5h1.5v1.5h-1.5zM1749 1023.5h1.5v1.5h-1.5zM1733 1027h1.5v1.5h-1.5zM1737 1027h1.5v1.5h-1.5zM1741 1027h1.5v1.5h-1.5zM1745 1027h1.5v1.5h-1.5zM1749 1027h1.5v1.5h-1.5z"/></g>
</svg>

<div class="a" style="left:0;top:1039px;width:1920px;height:2px;background:#1b3a57"></div>
</body></html>
